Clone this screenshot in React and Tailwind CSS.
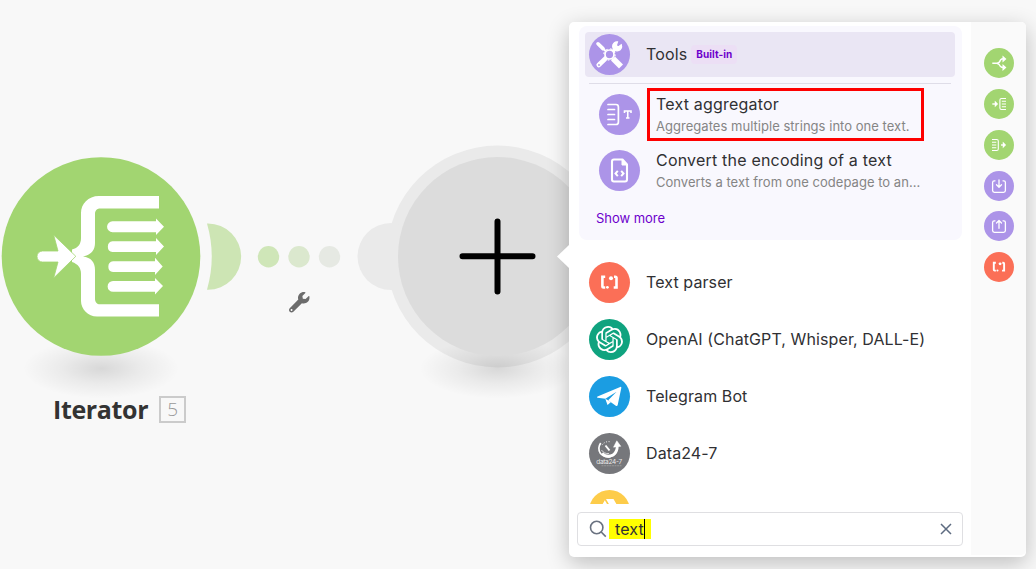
import React from "react";
import { FaWrench } from "react-icons/fa";
import { SiOpenai } from "react-icons/si";

function Canvas() {
  return (
    <svg className="absolute left-0 top-0" width="620" height="569" viewBox="0 0 620 569">
      <defs>
        <radialGradient id="ground">
          <stop offset="0" stopColor="#000" stopOpacity="0.13" />
          <stop offset="0.5" stopColor="#000" stopOpacity="0.055" />
          <stop offset="1" stopColor="#000" stopOpacity="0" />
        </radialGradient>
      </defs>
      <circle cx="497.500" cy="256.500" r="111" fill="#eaeaea" />
      <circle cx="391" cy="256.500" r="33.500" fill="#eaeaea" />
      <ellipse cx="101" cy="368.500" rx="78" ry="30" fill="url(#ground)" />
      <ellipse cx="497.500" cy="368.500" rx="78" ry="30" fill="url(#ground)" />
      <circle cx="497.500" cy="256.500" r="99.500" fill="#dcdcdc" />
      <path d="M497.500 221.500V291.500M462.500 256.200H532.500" stroke="#000" strokeWidth="6" strokeLinecap="round" />

      <path d="M207 223.500H208A33.150 33.150 0 0 1 208 289.800H207Q216.500 256.500 207 223.500Z" fill="#cde5b4" />
      <circle cx="268.500" cy="256.700" r="10.700" fill="#cfe6b8" />
      <circle cx="299" cy="256.700" r="10.700" fill="#dbe8ce" />
      <circle cx="329.500" cy="256.700" r="10.700" fill="#e6e9e3" />

      <circle cx="101" cy="256.500" r="99.300" fill="#a2d571" />
      <g fill="#fff">
        <path d="M159 196H99C88 196 81 204 81 213V238C81 244 78 248 72 249.500V262C78 264 81 268 81 274V301C81 309 88 316.500 97 316.500H159V304.300H100C97 304.300 95 302 95 299V270C95 262 91 257.500 83 256.500C91 255 95 250 95 243V214C95 210.500 97 208.400 100 208.400H159Z" />
        <path d="M42.500 251H58L53.700 235L75.800 256.300L53.700 278L58 262H42.500A5.500 5.500 0 0 1 42.500 251Z" stroke="#a2d571" strokeWidth="0.800" />
        <path d="M112.500 221.300H156V218.500L164 226.700L156 235V232.200H112.500A5.400 5.400 0 0 1 112.500 221.300Z" />
        <path d="M112.500 241.300H156V238L164 246.500L156 255V252H112.500A5.400 5.400 0 0 1 112.500 241.300Z" />
        <path d="M113 261.300H155V257.800L162.700 266.500L155 275V272H113A5.400 5.400 0 0 1 113 261.300Z" />
        <path d="M113 281H155V278L163 286L155 294.500V291.800H113A5.400 5.400 0 0 1 113 281Z" />
      </g>
    </svg>
  );
}

function ToolsIcon() {
  return (
    <svg viewBox="0 0 41 41" className="size-full" fill="none" stroke="#fff">
      <path d="M9 9.800L14 14.600" strokeWidth="3.600" strokeLinecap="round" />
      <path d="M13.500 14L17 17.500" strokeWidth="2" />
      <path d="M16 25L9.700 31" strokeWidth="4.600" strokeLinecap="round" />
      <circle cx="10" cy="31" r="0.900" fill="#ac94e8" stroke="none" />
      <path d="M23.500 17.500L27.500 13.800" strokeWidth="3.200" />
      <path d="M32.300 10.600A4.500 4.500 0 1 1 28.500 7.800L27.300 11.500L29.300 13Z" fill="#fff" stroke="#fff" strokeWidth="1.200" />
      <path d="M24 24.500L32 32.500" strokeWidth="5.600" />
      <circle cx="20.500" cy="20.500" r="4.500" fill="#ac94e8" strokeWidth="1.700" />
      <circle cx="20.500" cy="20.500" r="5.600" strokeWidth="1.200" strokeDasharray="1.800 2.600" />
    </svg>
  );
}

function AggregatorIcon() {
  return (
    <svg viewBox="0 0 41 41" className="size-full" fill="none" stroke="#fff" strokeWidth="1.700" strokeLinecap="round">
      <path d="M9 10.500H17Q19.400 10.500 19.400 13V28Q19.400 30.500 17 30.500H9M9 15.500H15.500M9 20.500H15.500M9 25.500H15.500" />
      <path d="M25.500 19V17H32V19M28.750 17V24M27 24H30.500" strokeWidth="1.600" strokeLinecap="butt" />
    </svg>
  );
}

function FileCodeIcon() {
  return (
    <svg viewBox="0 0 41 41" className="size-full" fill="none" stroke="#fff" strokeWidth="2.100">
      <path d="M23.500 9.500H15Q13 9.500 13 11.500V29.500Q13 31.500 15 31.500H26Q28 31.500 28 29.500V14.500Z" strokeLinejoin="round" />
      <path d="M23 9V15H28.500Z" fill="#fff" strokeWidth="1" />
      <path d="M18.800 20.900L16.500 23.500L18.800 26.100M22.200 20.900L24.500 23.500L22.200 26.100" strokeWidth="2" />
    </svg>
  );
}

function ParserIcon() {
  return (
    <svg viewBox="0 0 41 41" className="size-full" fill="none" stroke="#fff" strokeWidth="2.600">
      <path d="M16.200 14.700H13.400V24.300Q13.400 25.500 14.600 25.500H16.200M25 14.700H26.300Q27.500 14.700 27.500 15.900V25.500H24.700" />
      <circle cx="18.400" cy="25.300" r="1.400" fill="#fff" stroke="none" />
      <circle cx="22" cy="16.200" r="2" fill="#fff" stroke="none" />
    </svg>
  );
}

function TelegramIcon() {
  return (
    <svg viewBox="0 0 41 41" className="size-full" fill="#fff">
      <path d="M8.500 20.600L31.200 10.900Q32.500 10.500 32.300 11.900L28.700 29Q28.200 30.600 26.800 29.700L19.200 24.300L27.600 15.800L16.400 22.700L8.600 21.800Q7.300 21.300 8.500 20.600Z" />
      <path d="M16.300 22.700L18.500 29L22 26Z" />
    </svg>
  );
}

function DataIcon() {
  return (
    <svg viewBox="0 0 41 41" className="size-full" fill="none" stroke="#fff">
      <path d="M11.700 10Q8 15.500 11.500 20.500Q15 24.500 21 23.800Q28.200 22 28.300 13" strokeWidth="1.700" />
      <path d="M13 20.500Q18 25.200 24 22Q28.500 19 28.300 12" strokeWidth="2.800" />
      <path d="M24.500 14.200L27.800 7.800L31.800 13.300Z" fill="#fff" strokeWidth="0.500" />
      <path d="M16.500 12.500L20.500 17.500" strokeWidth="2" />
      <path d="M13 12A8 8 0 0 1 22 9" strokeWidth="0.900" strokeDasharray="1 1.500" />
      <path d="M12.500 17Q15 21 20 20.500" strokeWidth="0.700" />
      <text x="20.200" y="30.500" textAnchor="middle" fontFamily="Inter, sans-serif" fontSize="6.500" textLength="26" fill="#e8e8e8" stroke="none">data24-7</text>
      <path d="M12.500 32.700H32.500" stroke="#999" strokeWidth="1.100" strokeDasharray="2 0.600" />
    </svg>
  );
}

function DriveIcon() {
  return (
    <svg viewBox="0 0 41 41" className="size-full" fill="#fff">
      <path d="M17 9H24.500L32 22H24.500ZM15.800 10.300L19.500 16.500L12.500 29L8.500 23ZM17 24H31.500L28 30H13.500Z" />
    </svg>
  );
}

function SplitIcon() {
  return (
    <svg viewBox="0 0 30 30" className="size-full" fill="none" stroke="#fff" strokeWidth="1.400">
      <path d="M8.300 15.300H13Q15.500 15 16.500 12Q17.500 10.800 19.500 10.800M13 15.300Q15.500 16 16.500 18.500Q17.500 19.500 19.500 19.500" />
      <path d="M19.200 9L21.400 11L19.200 13ZM19.200 17.500L21.400 19.500L19.200 21.500Z" fill="#fff" />
    </svg>
  );
}

function IteratorIcon() {
  return (
    <svg viewBox="0 0 30 30" className="size-full" fill="none" stroke="#fff" strokeWidth="1.100">
      <path d="M8.300 15H12" strokeWidth="1.400" />
      <path d="M11.300 13L13.300 15L11.300 17Z" fill="#fff" />
      <path d="M22 9.500H17.500Q15.900 9.500 15.900 11V19Q15.900 20.500 17.500 20.500H22M17.800 12.200H22M17.800 15H22M17.800 17.700H22" />
    </svg>
  );
}

function ArrayIcon() {
  return (
    <svg viewBox="0 0 30 30" className="size-full" fill="none" stroke="#fff" strokeWidth="1.100">
      <path d="M8 9.500H12.700Q14.300 9.500 14.300 11V19Q14.300 20.500 12.700 20.500H8M8 12.200H12.300M8 15H12.300M8 17.700H12.300" />
      <path d="M17 15H20.500" strokeWidth="1.400" />
      <path d="M19.300 13L21.300 15L19.300 17Z" fill="#fff" />
    </svg>
  );
}

function TrayIcon({ up = false }) {
  return (
    <svg viewBox="0 0 30 30" className="size-full" fill="none" stroke="#fff" strokeWidth="1.300" strokeLinecap="round" strokeLinejoin="round">
      <path d="M11 9.800H10.200Q8.600 9.800 8.600 11.500V19.500Q8.600 21.300 10.400 21.300H19.600Q21.400 21.300 21.400 19.500V11.500Q21.400 9.800 19.800 9.800H19" />
      {up ? <path d="M15 17.300V9.800M12.500 12L15 9.500L17.500 12" /> : <path d="M15 9V16M12.500 13.800L15 16.300L17.500 13.800" />}
    </svg>
  );
}

const apps = [
  { name: "Text parser", color: "bg-[#fb6f57]", icon: <ParserIcon /> },
  { name: "OpenAI (ChatGPT, Whisper, DALL-E)", color: "bg-[#10a37f]", icon: <SiOpenai className="size-[27px]" /> },
  { name: "Telegram Bot", color: "bg-[#1b9de2]", icon: <TelegramIcon /> },
  { name: "Data24-7", color: "bg-[#76777b]", icon: <DataIcon /> },
  { name: "", color: "bg-[#fdcc4a]", icon: <DriveIcon /> },
];

const shortcuts = [
  { color: "bg-[#a2d571]", icon: <SplitIcon /> },
  { color: "bg-[#a2d571]", icon: <IteratorIcon /> },
  { color: "bg-[#a2d571]", icon: <ArrayIcon /> },
  { color: "bg-[#ac94e8]", icon: <TrayIcon /> },
  { color: "bg-[#ac94e8]", icon: <TrayIcon up /> },
  { color: "bg-[#fb6f57]", icon: <ParserIcon /> },
];

function Badge({ color, children }) {
  return (
    <div className={`flex size-[41px] shrink-0 items-center justify-center overflow-hidden rounded-full text-white ${color}`}>
      {children}
    </div>
  );
}

function Panel() {
  return (
    <div className="absolute left-[569px] top-[22px] flex h-[535px] w-[457px] rounded-[5px] bg-white pb-[2px] shadow-[0_6px_22px_rgba(0,0,0,0.24)]">
      <div className="absolute -left-[12px] top-[223px] h-[23px] w-[12px] bg-white [clip-path:polygon(100%_0,0_50%,100%_100%)]" />
      <main className="flex w-[402px] flex-col">
        <div className="h-[482px] overflow-hidden pl-[10px] pr-[9px] pt-1">
          <section className="flex h-[214px] flex-col rounded-lg bg-[#f9f8fe] px-[6px] pt-[6px]">
            <div className="mr-px flex h-[45px] items-center rounded bg-[#eae6f4] pl-1">
              <Badge color="bg-[#ac94e8]"><ToolsIcon /></Badge>
              <span className="ml-4 pb-[2px] text-[16px] tracking-[0.15px]">Tools</span>
              <span className="ml-[4px] flex h-[19px] items-center rounded bg-[#ecdff5] px-[5px] text-[10px] font-bold tracking-[0.05px] text-[#6d00cc]">Built-in</span>
            </div>
            <div className="ml-1 mr-[5px] mt-[6px] h-px shrink-0 bg-[#dfdde8]" />
            <div className="ml-[14px] mt-[4px] flex h-[53px] items-center">
              <Badge color="bg-[#ac94e8]"><AggregatorIcon /></Badge>
              <div className="ml-[7px] flex h-[53px] w-[277px] flex-col border-[3px] border-[#fe0000] pl-[6px] pt-[3px]">
                <span className="text-[16px] leading-[20px] tracking-[0.2px]">Text aggregator</span>
                <span className="mt-[3px] whitespace-nowrap text-[13px] leading-[18px] tracking-[0.03px] text-[#858585]">Aggregates multiple strings into one text.</span>
              </div>
            </div>
            <div className="ml-[14px] mt-[3px] flex h-[53px] items-center">
              <Badge color="bg-[#ac94e8]"><FileCodeIcon /></Badge>
              <div className="ml-4 flex flex-col">
                <span className="text-[16px] leading-[20px] tracking-[0.2px]">Convert the encoding of a text</span>
                <span className="mt-[3px] whitespace-nowrap text-[13px] leading-[18px] tracking-[0.03px] text-[#858585]">Converts a text from one codepage to an...</span>
              </div>
            </div>
            <span className="ml-[11px] mt-[12px] text-[13px] leading-[18px] tracking-[-0.030px] text-[#6d00cc]">Show more</span>
          </section>
          <div className="flex flex-col gap-4 pl-[10px] pt-[22px]">
            {apps.map((app) => (
              <div key={app.color} className="flex items-center">
                <Badge color={app.color}>{app.icon}</Badge>
                <span className="ml-4 whitespace-nowrap pb-[2px] text-[16px] tracking-[0.1px]">{app.name}</span>
              </div>
            ))}
          </div>
        </div>
        <div className="ml-2 mt-2 flex h-[34px] w-[386px] items-center rounded border border-[#dfdfe2] pl-[11px] pr-[10px]">
          <svg width="18" height="18" viewBox="0 0 18 18" fill="none" stroke="#6a7280" strokeWidth="1.600">
            <circle cx="7.700" cy="7.500" r="6.200" />
            <path d="M12.200 12L16.800 16.600" />
          </svg>
          <div className="ml-[2px] flex h-5 w-[42px] items-center bg-[#ffff00] pl-[6px] text-[16px] tracking-[0.15px]">
            text
            <i className="h-5 w-px bg-black" />
          </div>
          <svg className="ml-auto" width="12" height="12" viewBox="0 0 12 12" stroke="#5d6b80" strokeWidth="1.500">
            <path d="M1 1L11 11M11 1L1 11" />
          </svg>
        </div>
      </main>
      <aside className="flex flex-1 flex-col items-center gap-[10.800px] rounded-r-[5px] bg-[#fafafa] pt-[26.300px]">
        {shortcuts.map((item, index) => (
          <div key={index} className={`size-[30px] shrink-0 rounded-full ${item.color}`}>{item.icon}</div>
        ))}
      </aside>
    </div>
  );
}

export default function App() {
  return (
    <div className="relative h-[569px] w-[1036px] overflow-hidden bg-[#f8f8f8] font-['Inter',sans-serif] text-[#303033]">
      <Canvas />
      <FaWrench className="absolute left-[289px] top-[292px] size-[20.500px] text-[#6c6c6c]" />
      <div className="absolute left-[53px] top-[393px] flex items-center">
        <span className="font-['Open_Sans',sans-serif] text-[25px] leading-8 font-bold tracking-[-0.350px] text-[#333]">Iterator</span>
        <span className="ml-[11px] mt-px flex h-[27px] w-[27px] items-center justify-center border-2 border-[#cbcbcb] pb-px font-['Open_Sans',sans-serif] text-[19px] font-light text-[#999]">5</span>
      </div>
      <Panel />
    </div>
  );
}
